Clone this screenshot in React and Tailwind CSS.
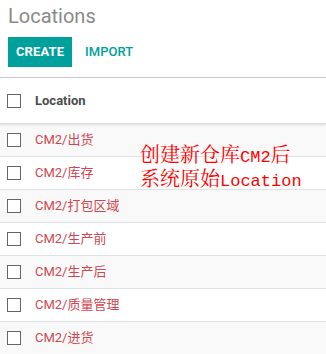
import React from 'react';

const rows = ['CM2/出货', 'CM2/库存', 'CM2/打包区域', 'CM2/生产前', 'CM2/生产后', 'CM2/质量管理', 'CM2/进货'];

const Box = () => (
  <span className="block w-[14px] h-[14px] border-[1.5px] border-[#666] bg-white" />
);

const App = () => {
  return (
    <div className="relative w-[326px] h-[354px] overflow-hidden bg-white font-['Roboto',sans-serif]">
      {/* control panel */}
      <div className="px-2 border-b border-[#ccc]">
        <h1 className="text-[20px] leading-[30px] pt-[1px] text-[#8a8a8a]">Locations</h1>
        <div className="flex items-center gap-[13px] pt-[6px] pb-[10px]">
          <button className="h-[30px] px-[8px] bg-[#00a09d] text-white text-[13px] font-bold tracking-[0.1px]">CREATE</button>
          <button className="text-[13px] font-medium text-[#00a09d]">IMPORT</button>
        </div>
      </div>

      {/* list */}
      <div className="flex items-center h-[46px] shadow-[0_1px_2px_rgba(0,0,0,0.12)] border-b border-[#ddd] relative z-10">
        <div className="w-[35px] pl-[7px]"><Box /></div>
        <span className="text-[13px] font-bold text-[#4c4c4c]">Location</span>
      </div>
      {rows.map((r, i) => (
        <div key={r} className={`flex items-center h-[33px] border-b border-[#dee2e6] ${i % 2 === 0 ? 'bg-[#f9f9f9]' : 'bg-white'}`}>
          <div className="w-[35px] pl-[7px]"><Box /></div>
          <span className="text-[13px] text-[#d0474f] font-['Roboto','Noto_Sans_CJK_SC',sans-serif]">{r}</span>
        </div>
      ))}

      {/* annotation */}
      <div className="absolute left-[140px] top-[144px] text-[#ff0000] text-[20px] leading-[20px] font-['Noto_Serif_CJK_SC','Noto_Sans_CJK_SC',serif]">
        <div>创建新仓库<span className="font-['Liberation_Mono',monospace] text-[17px]">CM2</span>后</div>
        <div>系统原始<span className="font-['Liberation_Mono',monospace] text-[17px]">Location</span></div>
      </div>
    </div>
  );
};

export default App;
